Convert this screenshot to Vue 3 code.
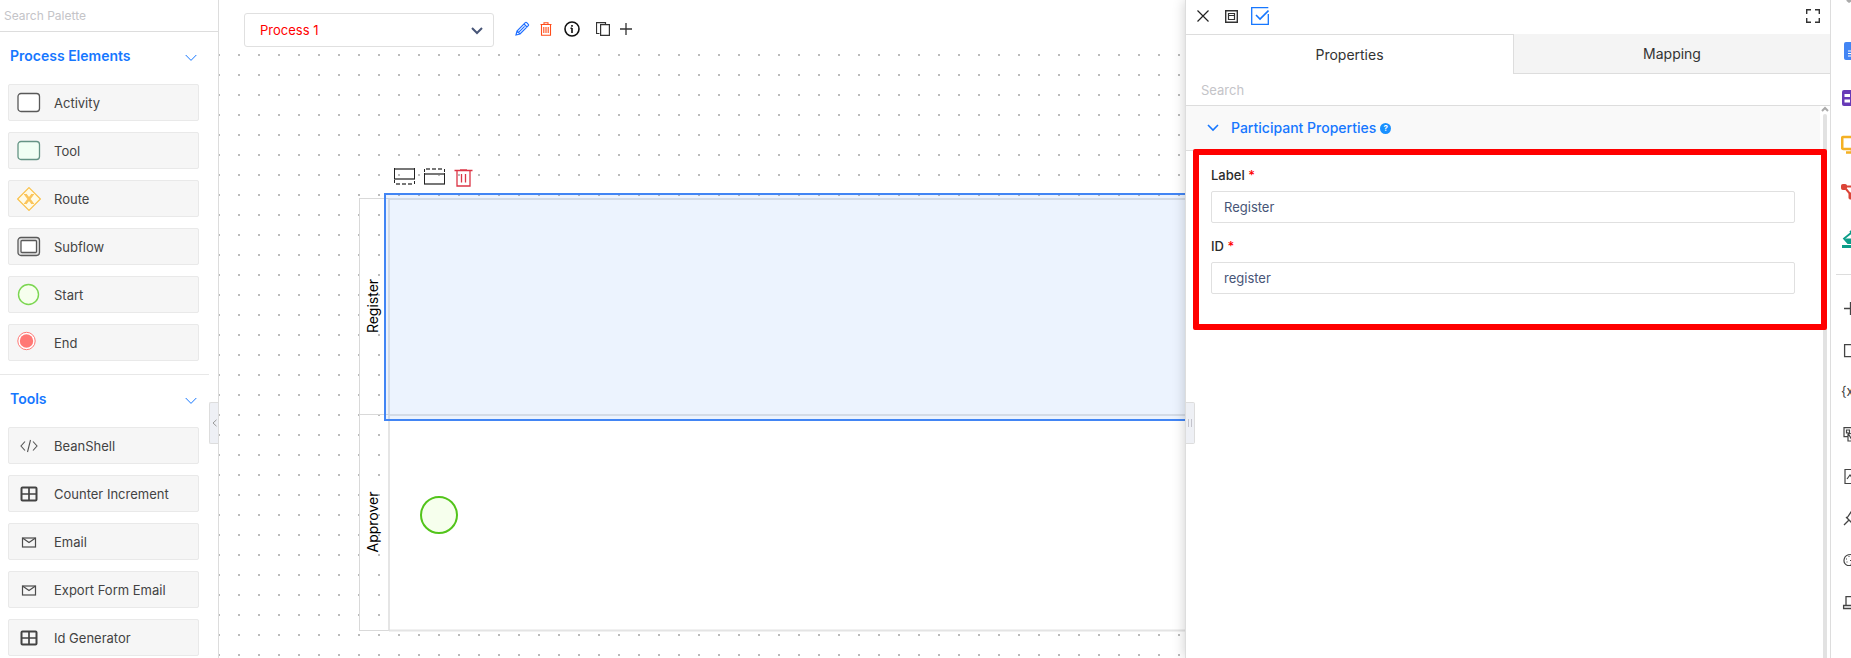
<script setup>
import { ref } from 'vue'

const groups = [
  {
    title: 'Process Elements',
    items: [
      { label: 'Activity', icon: 'activity' },
      { label: 'Tool', icon: 'tool' },
      { label: 'Route', icon: 'route' },
      { label: 'Subflow', icon: 'subflow' },
      { label: 'Start', icon: 'start' },
      { label: 'End', icon: 'end' },
    ],
  },
  {
    title: 'Tools',
    items: [
      { label: 'BeanShell', icon: 'code' },
      { label: 'Counter Increment', icon: 'table' },
      { label: 'Email', icon: 'mail' },
      { label: 'Export Form Email', icon: 'mail' },
      { label: 'Id Generator', icon: 'table' },
    ],
  },
]

const label = ref('Register')
const id = ref('register')
const process = ref('Process 1')
const paletteQuery = ref('')
const propertyQuery = ref('')
</script>

<template>
  <div class="app">
    <aside class="palette">
      <input v-model="paletteQuery" class="palette-search" type="text" placeholder="Search Palette" aria-label="Search Palette" />
      <section v-for="g in groups" :key="g.title" class="group">
        <button class="group-head" type="button">
          <span>{{ g.title }}</span>
          <svg width="12" height="8" viewBox="0 0 12 8"><path d="M.7 1 6 6.4 11.3 1" fill="none" stroke="#1677ff" /></svg>
        </button>
        <ul class="items">
          <li v-for="it in g.items" :key="it.label" class="item">
            <svg class="item-icon" width="24" height="24" viewBox="0 0 24 24" fill="none">
              <rect v-if="it.icon === 'activity'" x="1" y="2.500" width="21.500" height="18" rx="3" fill="#fff" stroke="#595959" stroke-width="1.300" />
              <rect v-else-if="it.icon === 'tool'" x="1" y="2.500" width="21.500" height="18" rx="3" fill="#f0fff4" stroke="#659485" stroke-width="1.300" />
              <g v-else-if="it.icon === 'route'">
                <path d="M12 .6 23.400 12 12 23.400.6 12z" fill="#fffbe6" stroke="#fac04a" stroke-width="1.200" />
                <path d="M8.500 7.500 15.500 16.500M15.500 7.500 8.500 16.500" stroke="#fbc55c" stroke-width="2.600" />
                <path d="M7 7.500h3M14 7.500h3M7 16.500h3M14 16.500h3" stroke="#fbc55c" stroke-width="1" />
              </g>
              <g v-else-if="it.icon === 'subflow'" stroke="#595959" stroke-width="1.300">
                <rect x="1" y="2.500" width="21.500" height="18" rx="3" fill="#e4e4e4" />
                <rect x="4" y="5.500" width="15.500" height="12" rx="1" fill="#fff" />
              </g>
              <circle v-else-if="it.icon === 'start'" cx="11.500" cy="11.500" r="10" fill="#f6ffed" stroke="#7bd651" stroke-width="1.400" />
              <g v-else-if="it.icon === 'end'">
                <circle cx="9.500" cy="10" r="8.700" fill="#fff" stroke="#ff7875" />
                <circle cx="9.500" cy="10" r="6.700" fill="#ff7875" />
              </g>
              <path v-else-if="it.icon === 'code'" d="M8 7.500 4 12l4 4.500M16 7.500l4 4.500-4 4.500M13.500 6l-3 12" stroke="#555" stroke-width="1.100" />
              <g v-else-if="it.icon === 'table'" stroke="#434343">
                <rect x="4.500" y="5.500" width="15" height="13" rx="1" stroke-width="2" />
                <path d="M12 5v14M4 12h16" stroke-width="1.700" />
              </g>
              <g v-else stroke="#4c4c4c" stroke-width="1.200">
                <rect x="5.500" y="8" width="13" height="9" />
                <path d="M5.500 8 12 12.500 18.500 8" />
              </g>
            </svg>
            <span>{{ it.label }}</span>
          </li>
        </ul>
      </section>
      <button class="collapse" type="button" aria-label="Collapse palette">
        <svg width="5" height="8" viewBox="0 0 5 8"><path d="M4.500.8 1 4l3.500 3.200" fill="none" stroke="#999" /></svg>
      </button>
    </aside>

    <main class="board">
      <div class="toolbar">
        <div class="picker">
          <select v-model="process" aria-label="Process">
            <option>Process 1</option>
          </select>
          <svg class="picker-arrow" width="12" height="8" viewBox="0 0 12 8"><path d="M1 1l5 5 5-5" fill="none" stroke="#475577" stroke-width="2" /></svg>
        </div>
        <div class="actions">
          <button type="button" aria-label="Edit">
            <svg width="15" height="16" viewBox="0 0 15 16" fill="none" stroke="#1f6fff" stroke-width="1.200"><path d="M1 14l1-4 8.300-8.300q.7-.7 1.400 0l1.600 1.600q.7.700 0 1.400L5 13zM9 3l3 3M2 10l3 3M3.600 11.400l6-6" /></svg>
          </button>
          <button type="button" aria-label="Delete">
            <svg width="12" height="14" viewBox="0 0 12 14" fill="none" stroke="#ff4d1a"><path d="M.5 2.500h11M4 2V.7h4V2M1.500 2.500v10.800h9V2.500M3.800 5v6M6 5v6M8.200 5v6" stroke-width="1.100" /></svg>
          </button>
          <button class="info" type="button" aria-label="Info">
            <svg width="16" height="16" viewBox="0 0 16 16" fill="none" stroke="#111" stroke-width="1.600"><circle cx="8" cy="8" r="7" /><path d="M8 7v5M8 4v1.800M6.500 7.300H8" /></svg>
          </button>
          <button class="copy" type="button" aria-label="Copy">
            <svg width="14" height="14" viewBox="0 0 14 14" fill="none" stroke="#333" stroke-width="1.200"><path d="M3.500 11.500h-3V.6h9v2M4.600 2.600h8.800v10.800H4.600z" /></svg>
          </button>
          <button type="button" aria-label="Add">
            <svg width="12" height="12" viewBox="0 0 12 12" stroke="#333" stroke-width="1.300"><path d="M6 0v12M0 6h12" /></svg>
          </button>
        </div>
      </div>

      <svg class="diagram">
        <defs>
          <pattern id="dots" x="-1" y="4" width="20" height="20" patternUnits="userSpaceOnUse">
            <rect width="2" height="2" fill="#bbb" />
          </pattern>
        </defs>
        <rect width="100%" height="100%" fill="url(#dots)" />
        <g transform="translate(140 148)">
          <rect x="30" y="0" width="1600" height="433" fill="#fff" />
          <path d="M30 1H1600M30 432.500H1600" stroke="#e4e4e4" stroke-width="2" />
          <path d="M0 .5H30M.5 0V433M0 216.500H30M0 432.500H30" fill="none" stroke="#d9d9d9" />
          <path d="M30 217H1600M30 0V433" stroke="#ddd" stroke-width="1.500" />
          <text class="lane-name" transform="translate(19 108) rotate(-90)">Register</text>
          <text class="lane-name" transform="translate(19 324) rotate(-90)">Approver</text>
          <circle cx="80" cy="317" r="18" fill="#f6ffed" stroke="#52c41a" stroke-width="2" />
          <rect x="26" y="-4" width="1600" height="226" fill="#4285f4" fill-opacity=".1" stroke="#4285f4" stroke-width="2" />
        </g>
        <g transform="translate(175 118)" fill="none">
          <path d="M0 1h21M0 11h21M30 6h21M30 16h21" stroke="#777" stroke-width="2" />
          <path d="M2 16h17M32 1h17" stroke="#777" stroke-width="2" stroke-dasharray="4 2" />
          <path d="M.5 0v11M20.500 0v11M.5 12v3M20.500 13v3M30.500 5v11M50.500 5v11M30.500 1v3M50.500 1v3" stroke="#222" />
          <path d="M60.500 2.500h18M66 1.800h7M63 3v15h13V3M67.500 6v8.500M71.500 6v8.500" stroke="#dc3545" stroke-width="1.300" />
        </g>
      </svg>
    </main>

    <section class="panel">
      <header class="panel-head">
        <button type="button" aria-label="Close">
          <svg width="12" height="12" viewBox="0 0 12 12" stroke="#222" stroke-width="1.200"><path d="M.5.5l11 11M11.500.5l-11 11" /></svg>
        </button>
        <button type="button" aria-label="Window">
          <svg width="13" height="13" viewBox="0 0 13 13" fill="none" stroke="#333"><path d="M.7.700h11.600v11.600H.7z" stroke-width="1.400" /><path d="M3.500 3.500h6v6h-6zM3.500 5.500h6" stroke-width="1.200" /></svg>
        </button>
        <button type="button" aria-label="Validate">
          <svg width="18" height="18" viewBox="0 0 18 18" fill="none" stroke="#1677ff"><path d="M17.300 7v10.300H.7V.7h16.600" stroke-width="1.300" /><path d="M5 8l4 4 8.500-8.500" stroke-width="1.600" /></svg>
        </button>
        <button class="expand" type="button" aria-label="Full screen">
          <svg width="14" height="14" viewBox="0 0 14 14" fill="none" stroke="#333" stroke-width="1.400"><path d="M.7 5V.7H5M9 .7h4.300V5M13.300 9v4.300H9M5 13.300H.7V9" /></svg>
        </button>
      </header>
      <nav class="tabs">
        <button class="tab active" type="button">Properties</button>
        <button class="tab" type="button">Mapping</button>
      </nav>
      <input v-model="propertyQuery" class="panel-search" type="text" placeholder="Search" aria-label="Search properties" />
      <div class="scroll">
        <div class="scroll-body">
          <button class="accordion" type="button">
            <svg width="12" height="8" viewBox="0 0 12 8"><path d="M1 1l5 5 5-5" fill="none" stroke="#1677ff" stroke-width="1.600" /></svg>
            <span>Participant Properties</span>
            <i class="help">?</i>
          </button>
          <form class="fields" @submit.prevent>
            <label for="f-label">Label <b>*</b></label>
            <input id="f-label" v-model="label" type="text" />
            <label for="f-id">ID <b>*</b></label>
            <input id="f-id" v-model="id" type="text" />
          </form>
        </div>
        <div class="scrollbar">
          <svg width="8" height="6" viewBox="0 0 8 6"><path d="M1 5l3-3 3 3" fill="none" stroke="#aaa" stroke-width="2" /></svg>
          <div class="thumb"></div>
        </div>
      </div>
      <button class="grip" type="button" aria-label="Resize panel">
        <svg width="4" height="8" viewBox="0 0 4 8" stroke="#c3c3cc"><path d="M.5 0v8M3.500 0v8" /></svg>
      </button>
    </section>

    <nav class="rail">
      <button class="rail-first" type="button" aria-label="User">
        <svg width="24" height="24" viewBox="0 0 24 24"><path d="M5.500 0h5v1.500L8 3 5.500 1z" fill="#aaa" /></svg>
      </button>
      <button class="app-link" type="button" aria-label="Forms">
        <svg width="24" height="24" viewBox="0 0 24 24"><rect x="3" y="3" width="14" height="18" rx="2" fill="#4285f4" /><path d="M7 12h8M7 14.500h8M7 17h8" stroke="#fff" /></svg>
      </button>
      <button class="app-link" type="button" aria-label="Lists">
        <svg width="24" height="24" viewBox="0 0 24 24"><rect x="1" y="4" width="18" height="16" rx="2" fill="#673ab7" /><path d="M3.500 8H9v3H3.500zM3.500 13.500H9v3H3.500z" fill="#fff" /></svg>
      </button>
      <button class="app-link" type="button" aria-label="Interface">
        <svg width="24" height="24" viewBox="0 0 24 24" fill="none" stroke="#f4b124" stroke-width="2.600"><rect x="1.200" y="4" width="20" height="12" rx="1" /><path d="M5 19.500h14M11 16v4" /></svg>
      </button>
      <button class="app-link" type="button" aria-label="Process">
        <svg width="24" height="24" viewBox="0 0 24 24" fill="#db4437" stroke="#db4437"><rect x=".5" y="4.500" width="5" height="5" rx="1" /><path d="M5 6.500h12M5 9l5 6" stroke-width="2" /><rect x="8" y="13" width="6" height="6" rx="1" /></svg>
      </button>
      <button class="app-link" type="button" aria-label="Theme">
        <svg width="24" height="24" viewBox="0 0 24 24" fill="none"><path d="M1 19.500h20" stroke="#0b9d88" stroke-width="3" /><path d="M9 4l7 7-5 5H7l-4-4.500L10 6" stroke="#0b9d88" stroke-width="1.800" /><path d="M4 11.500h12l-5 4.500H7z" fill="#0b9d88" /></svg>
      </button>
      <hr />
      <button class="util-link" type="button" aria-label="Add item">
        <svg width="24" height="24" viewBox="0 0 24 24" stroke="#444" stroke-width="1.300"><path d="M9.500 6v13M3 12.500h13" /></svg>
      </button>
      <button class="util-link" type="button" aria-label="Page">
        <svg width="24" height="24" viewBox="0 0 24 24" fill="none" stroke="#444" stroke-width="1.300"><path d="M3.600 6.600h12v12h-12z" /></svg>
      </button>
      <button class="util-link variable" type="button" aria-label="Variables">{x}</button>
      <button class="util-link" type="button" aria-label="Messages">
        <svg width="24" height="24" viewBox="0 0 24 24" fill="none" stroke="#444" stroke-width="1.200"><path d="M7 14.600H3V5.600h14v5M5.500 8h3v3h-3zM7 11l4 7h8v-6h-8zM7 12v7h5" /></svg>
      </button>
      <button class="util-link" type="button" aria-label="Images">
        <svg width="24" height="24" viewBox="0 0 24 24" fill="none" stroke="#444" stroke-width="1.200"><path d="M4 5.500h13v14H4zM6 15l3-4 3 4 3-4" /></svg>
      </button>
      <button class="util-link" type="button" aria-label="Plugins">
        <svg width="24" height="24" viewBox="0 0 24 24" fill="none" stroke="#444" stroke-width="1.300"><path d="M3 19l5-5M5 11l6 6M6 12l4-6 6 6-5 4" /></svg>
      </button>
      <button class="util-link" type="button" aria-label="Palette">
        <svg width="24" height="24" viewBox="0 0 24 24" fill="none" stroke="#444" stroke-width="1.200"><path d="M10 17.500H6.500C1 15 2 6.500 10 6.500c6 0 8 6 4 7h-3z" /><path d="M5 11h1M7.500 8.500h1M9 12.500h2M5.500 14h1" /></svg>
      </button>
      <button class="util-link" type="button" aria-label="Performance">
        <svg width="24" height="24" viewBox="0 0 24 24" fill="none" stroke="#444" stroke-width="1.300"><path d="M5 15.500V6.600h13v9M2.600 15.500h17v3h-17z" /></svg>
      </button>
    </nav>
  </div>
</template>

<style>
body {
  margin: 0;
}
</style>

<style scoped>
* {
  box-sizing: border-box;
}
.app {
  display: flex;
  height: 100vh;
  overflow: hidden;
  background: #fff;
  color: #434343;
  font: 13px/20px Inter, "Liberation Sans", sans-serif;
}
button {
  display: flex;
  align-items: center;
  padding: 0;
  border: 0;
  background: none;
  color: inherit;
  font: inherit;
  cursor: pointer;
}
input,
select {
  font: inherit;
  outline: none;
}
svg {
  display: block;
  flex: none;
}

.palette {
  position: relative;
  flex: none;
  width: 219px;
  border-right: 1px solid #ddd;
}
.palette-search {
  display: block;
  width: 100%;
  height: 32px;
  padding: 0 4px;
  border: 0;
  border-bottom: 1px solid #ddd;
  font-size: 12px;
}
input::placeholder {
  color: #c4c4c8;
  opacity: 1;
}
.group {
  width: 209px;
  padding: 0 10px 13px 8px;
  border-bottom: 1px solid #e8e8e8;
}
.group-head {
  justify-content: space-between;
  width: 100%;
  height: 52px;
  padding: 0 2px 4px;
  color: #1677ff;
  font-size: 14px;
  font-weight: 600;
}
.group-head svg {
  margin-top: 4px;
}
.items {
  display: flex;
  flex-direction: column;
  gap: 11px;
  margin: 0;
  padding: 0;
  list-style: none;
}
.item {
  display: flex;
  align-items: center;
  gap: 13px;
  height: 37px;
  padding: 0 8px;
  border: 1px solid #e9e9e9;
  border-radius: 2px;
  background: #f6f6f6;
}
.collapse {
  position: absolute;
  top: 402px;
  right: 0;
  justify-content: center;
  width: 9px;
  height: 42px;
  border: 1px solid #ddd;
  border-right: 0;
  border-radius: 2px 0 0 2px;
  background: #eef0f5;
}

.board {
  display: flex;
  flex: 1;
  flex-direction: column;
  min-width: 0;
}
.toolbar {
  display: flex;
  align-items: center;
  gap: 21px;
  height: 50px;
  padding: 10px 25px 0;
}
.picker {
  position: relative;
  width: 250px;
}
.picker select {
  display: block;
  width: 100%;
  height: 34px;
  padding: 0 15px;
  border: 1px solid #e0e0e0;
  border-radius: 3px;
  background: #fff;
  color: red;
  appearance: none;
}
.picker-arrow {
  position: absolute;
  top: 14px;
  right: 11px;
  pointer-events: none;
}
.actions {
  display: flex;
  align-items: center;
  gap: 10px;
  padding-bottom: 2px;
}
.info {
  margin-left: 2px;
}
.copy {
  margin-left: 6px;
}
.diagram {
  flex: 1;
  width: 100%;
  min-height: 0;
}
.lane-name {
  fill: #000;
  font-size: 14px;
  text-anchor: middle;
}

.panel {
  position: relative;
  display: flex;
  flex: none;
  flex-direction: column;
  width: 645px;
  border-left: 1px solid #ddd;
  background: #fff;
  box-shadow: 0 0 12px rgba(0, 0, 0, 0.2);
}
.panel-head {
  display: flex;
  align-items: center;
  gap: 16px;
  height: 34px;
  padding: 0 10px 2px 11px;
}
.panel-head button:nth-child(3) {
  margin-left: -3px;
}
.panel-head .expand {
  margin-left: auto;
}
.tabs {
  display: flex;
  height: 40px;
}
.tab {
  flex: 316;
  justify-content: center;
  border: 1px solid #ddd;
  border-width: 0 0 1px 1px;
  background: #f4f4f4;
  color: #333;
  font-size: 14px;
}
.tab.active {
  flex: 327;
  border-width: 1px 0 0;
  background: #fff;
}
.panel-search {
  height: 32px;
  padding: 0 15px;
  border: 0;
  border-bottom: 1px solid #ddd;
}
.scroll {
  display: flex;
  flex: 1;
  min-height: 0;
}
.scroll-body {
  flex: 1;
}
.accordion {
  gap: 12px;
  width: 100%;
  height: 45px;
  padding: 0 21px;
  border-bottom: 1px solid #ddd;
  background: #f9f9f9;
  color: #1677ff;
  font-size: 14px;
  font-weight: 500;
}
.help {
  width: 11px;
  height: 11px;
  margin-left: -8px;
  border-radius: 50%;
  background: #1890ff;
  color: #fff;
  font-size: 8px;
  font-style: normal;
  font-weight: 700;
  line-height: 11px;
}
.fields {
  position: relative;
  z-index: 1;
  display: flex;
  flex-direction: column;
  margin: -2px -7px 0 7px;
  padding: 10px 26px 30px 12px;
  border: 6px solid red;
  border-radius: 2px;
}
.fields label {
  padding-bottom: 6px;
  color: #2b2b2b;
  font-size: 13px;
  font-weight: 500;
}
.fields b {
  color: red;
  font-weight: 500;
}
.fields input {
  height: 32px;
  margin-bottom: 13px;
  padding: 0 12px;
  border: 1px solid #e0e0e0;
  border-radius: 2px;
  background: #fff;
  color: #475577;
}
.fields input:last-child {
  margin-bottom: 0;
}
.scrollbar {
  display: flex;
  flex-direction: column;
  align-items: center;
  width: 10px;
}
.thumb {
  flex: 1;
  width: 4px;
  margin-top: 2px;
  border-radius: 2px 2px 0 0;
  background: #e2e2e2;
}
.grip {
  position: absolute;
  top: 402px;
  left: 0;
  justify-content: center;
  width: 9px;
  height: 42px;
  border: 1px solid #ddd;
  border-left: 0;
  border-radius: 0 2px 2px 0;
  background: #eef0f5;
}

.rail {
  z-index: 1;
  flex: none;
  width: 21px;
  padding-left: 10px;
  border-left: 1px solid #ddd;
  background: #fff;
  overflow: hidden;
}
.rail-first {
  align-items: flex-start;
  height: 27px;
}
.app-link {
  height: 47px;
}
.rail hr {
  margin: 12px 0 12px -5px;
  border: 0;
  border-top: 1px solid #ddd;
}
.util-link {
  height: 42px;
}
.variable {
  height: 40px;
  margin-bottom: 2px;
}
</style>
